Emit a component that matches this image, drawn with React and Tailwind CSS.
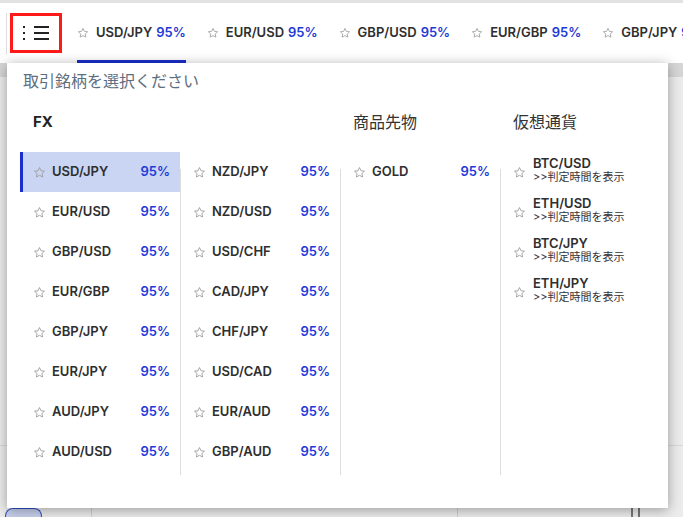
import React from "react";

const fxLeft = ["USD/JPY", "EUR/USD", "GBP/USD", "EUR/GBP", "GBP/JPY", "EUR/JPY", "AUD/JPY", "AUD/USD"];
const fxRight = ["NZD/JPY", "NZD/USD", "USD/CHF", "CAD/JPY", "CHF/JPY", "USD/CAD", "EUR/AUD", "GBP/AUD"];
const crypto = ["BTC/USD", "ETH/USD", "BTC/JPY", "ETH/JPY"];
const tabs = ["USD/JPY", "EUR/USD", "GBP/USD", "EUR/GBP", "GBP/JPY"];

function Star({ size = 13 }) {
  return (
    <svg width={size} height={size} viewBox="0 0 24 24" className="shrink-0">
      <path
        d="M12 2.8l2.8 5.9 6.4.8-4.7 4.4 1.2 6.4L12 17.2l-5.7 3.1 1.2-6.4-4.7-4.4 6.4-.8z"
        fill="none"
        stroke="#9a9a9a"
        strokeWidth="1.6"
        strokeLinejoin="round"
      />
    </svg>
  );
}

function Row({ name, active }) {
  return (
    <div
      className={
        "h-[40px] flex items-center pr-[10px] " +
        (active ? "bg-[#c9d5f3] border-l-[3px] border-[#1a2ecc] pl-[10px]" : "pl-[13px]")
      }
    >
      <Star />
      <span className="ml-[6px] flex-1 text-[13px] font-semibold text-[#2e2e2e]">{name}</span>
      <span className="text-[13px] font-semibold text-[#1d3ad6]">95%</span>
    </div>
  );
}

function List({ items, sep, activeFirst }) {
  return (
    <div
      className={
        "relative mt-[20px] " +
        (sep ? "before:absolute before:left-0 before:top-[17px] before:h-[306px] before:w-px before:bg-[#dddddd]" : "")
      }
    >
      {items.map((n, i) => (
        <Row key={n} name={n} active={activeFirst && i === 0} />
      ))}
    </div>
  );
}

export default function App() {
  return (
    <div className="relative w-[683px] h-[517px] overflow-hidden bg-[#ececec] flex flex-col font-['Inter','Noto_Sans_CJK_JP',sans-serif]">
      <div className="h-[3px] bg-[#e2e2e2]" />
      <header className="h-[60px] bg-white flex items-center overflow-hidden">
        <div className="shrink-0 ml-[6px] w-px h-[41px] bg-[#dddddd]" />
        <div className="shrink-0 ml-[3px] w-[52px] h-[40px] border-[3px] border-[#ff1a1a] flex items-center justify-center gap-[9px]">
          <div className="flex flex-col gap-[4px]">
            <span className="w-[2px] h-[2px] bg-[#222]" />
            <span className="w-[2px] h-[2px] bg-[#222]" />
            <span className="w-[2px] h-[2px] bg-[#222]" />
          </div>
          <div className="flex flex-col gap-[4px]">
            <span className="w-[15px] h-[2px] bg-[#222]" />
            <span className="w-[15px] h-[2px] bg-[#222]" />
            <span className="w-[15px] h-[2px] bg-[#222]" />
          </div>
        </div>
        <div className="shrink-0 ml-[15px] h-full flex gap-[21px] whitespace-nowrap">
          {tabs.map((t, i) => (
            <div key={t} className="shrink-0 relative h-full flex items-center">
              <Star size={12} />
              <span className="ml-[7px] text-[13px] font-semibold text-[#2e2e2e]">{t}</span>
              <span className="ml-[4px] text-[13px] font-semibold text-[#1d3ad6]">95%</span>
              {i === 0 && <span className="absolute left-0 right-0 bottom-0 h-[3px] bg-[#1a2ec9]" />}
            </div>
          ))}
        </div>
      </header>
      <main className="flex-1 flex flex-col">
        <div className="h-[14px] bg-[#d6d6d6]" />
        <div className="h-[369px] border-b border-[#d8d8d8]" />
        <div className="flex-1" />
        <div className="h-[9px] flex">
          <div className="w-[5px]" />
          <div className="w-[37px] rounded-t-[8px] border border-b-0 border-[#2f4fc0] bg-[#c6cfec]" />
          <div className="w-[50px] border-r border-[#cfcfcf]" />
          <div className="w-[366px] border-r border-[#cfcfcf]" />
          <div className="w-[175px] border-r-2 border-[#777]" />
          <div className="w-[7px] border-r-2 border-[#777]" />
        </div>
      </main>

      <div className="absolute left-[7px] top-[63px] w-[661px] h-[445px] bg-white shadow-[0_2px_12px_rgba(0,0,0,0.35)] pt-[8px] pl-[13px]">
        <div className="ml-[3px] text-[16px] leading-[20px] text-[#5d6e80]">取引銘柄を選択ください</div>
        <div className="flex mt-[21px]">
          <div className="shrink-0 w-[160px]">
            <div className="h-[20px] leading-[20px] pl-[13px] text-[15px] font-bold text-[#222]">FX</div>
            <List items={fxLeft} activeFirst />
          </div>
          <div className="shrink-0 w-[160px]">
            <div className="h-[20px]" />
            <List items={fxRight} sep />
          </div>
          <div className="shrink-0 w-[160px]">
            <div className="h-[20px] leading-[20px] pl-[13px] text-[16px] text-[#333]">商品先物</div>
            <List items={["GOLD"]} sep />
          </div>
          <div className="shrink-0 w-[160px]">
            <div className="h-[20px] leading-[20px] pl-[13px] text-[16px] text-[#333]">仮想通貨</div>
            <div className="relative mt-[20px] h-[320px] before:absolute before:left-0 before:top-[17px] before:h-[306px] before:w-px before:bg-[#dddddd]">
              {crypto.map((c) => (
                <div key={c} className="h-[40px] flex items-center pl-[13px]">
                  <Star />
                  <div className="ml-[7px] flex flex-col mt-[-6px]">
                    <span className="text-[13px] leading-[16px] font-semibold text-[#2e2e2e]">{c}</span>
                    <span className="text-[11px] leading-[13px] text-[#333]">&gt;&gt;判定時間を表示</span>
                  </div>
                </div>
              ))}
            </div>
          </div>
        </div>
      </div>
    </div>
  );
}
